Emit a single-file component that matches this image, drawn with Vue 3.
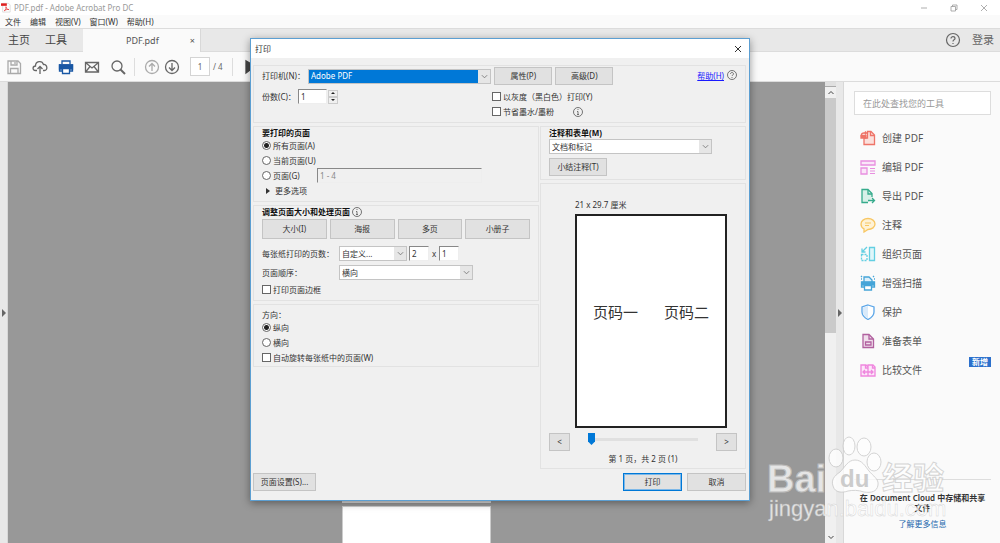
<script setup>
import { ref } from "vue";

const menus = ["文件", "编辑", "视图(V)", "窗口(W)", "帮助(H)"];
const pageModes = ["大小(I)", "海报", "多页", "小册子"];

const tools = [
  {
    name: "创建 PDF",
    color: "#ee7468",
    icon: '<path d="M4 8V14.500H14.500V5L11 1.500H7.500V8Z" fill="#fbe0dc"/><path d="M10.500 2V5.500H14"/><path d="M1.500 7V5C1.500 3.500 2.500 3 4 3H6M5 1.500L6.500 3L5 4.500" /><path d="M1 5.500H6V8H1Z" fill="#ee7468"/>',
  },
  {
    name: "编辑 PDF",
    color: "#e88fdf",
    icon: '<path d="M1 2H15V6H1ZM1 9H7V15H1Z" fill="#fae6f8"/><path d="M10 9.500H15M10 12H15M10 14.500H15" stroke-width="1"/>',
  },
  {
    name: "导出 PDF",
    color: "#36ab8c",
    icon: '<path d="M8 14.500H2V1.500H8L12 5.500V9" fill="#d8f0e8"/><path d="M8 2V6H12M8 12.500H14M12 10L14.500 12.500L12 15"/>',
  },
  {
    name: "注释",
    color: "#f8c763",
    icon: '<path d="M8 1.500C12 1.500 15 4 15 7S12 12.500 8 12.500L4 15V11.800C2 10.800 1 9 1 7C1 4 4 1.500 8 1.500Z" fill="#fef2d6"/><path d="M5 6H11M5 8.500H9" stroke-width="1"/>',
  },
  {
    name: "组织页面",
    color: "#63cfe2",
    icon: '<path d="M9.500 1.500H14.500V14.500H9.500Z" fill="#dff6fa"/><path d="M7 1L2 6M2 2.500V6H5.500"/><path d="M1.500 8.500H7V14.500H1.500Z" stroke-dasharray="2 1"/>',
  },
  {
    name: "增强扫描",
    color: "#45a5d8",
    icon: '<path d="M4 7V2H9L12 5V7" fill="#dceffa"/><path d="M4 12H1.500V7H14.500V12H12"/><path d="M2 7.500H14V10H2Z" fill="#45a5d8"/><path d="M4.500 10.500H11.500V15H4.500Z" fill="#fff"/><path d="M1 1L2 2M2 4H1M14 1L13 2M14 4H15"/>',
  },
  {
    name: "保护",
    color: "#5ba6e8",
    icon: '<path d="M8 1L14 3V8C14 12 11 14 8 15.500C5 14 2 12 2 8V3Z" fill="#fff"/><path d="M8 2V14.500C5 13 3 11 3 8V3.500Z" fill="#d9eafa" stroke="none"/>',
  },
  {
    name: "准备表单",
    color: "#b1619f",
    icon: '<path d="M3 1.500H9L13.500 6V14.500H3Z" fill="#f0dfec"/><path d="M9 2V6H13M5.500 9H11V12H5.500Z"/>',
  },
  {
    name: "比较文件",
    color: "#ef86de",
    icon: '<path d="M1 3H6L8 5V14H1ZM8 3H13L15 5V14H8Z" fill="#fce6f9"/><path d="M5.500 3V6H8M12.500 3V6H15M3 10H13M5 8L3 10L5 12M11 8L13 10L11 12"/>',
    badge: "新增",
  },
];

const printer = ref("Adobe PDF");
const copies = ref("1");
const gray = ref(false);
const saveInk = ref(false);
const range = ref("all");
const rangeText = ref("1 - 4");
const perSheet = ref("自定义...");
const cols = ref("2");
const rows = ref("1");
const order = ref("横向");
const border = ref(false);
const orientation = ref("portrait");
const autoRotate = ref(false);
const comments = ref("文档和标记");
const preview = ref(0);
const currentPage = ref("1");
const search = ref("");
</script>

<template>
  <div class="app">
    <header class="titlebar">
      <svg class="logo" viewBox="0 0 12 12">
        <path d="M2 1H9L11 3V11.500H2Z" fill="#fff" stroke="#ccc" stroke-width=".7" />
        <path d="M0 1H7V4H0Z" fill="#e02020" />
        <path d="M4 10C6 8 6.500 6 6 5C5.500 5 6 8 9.500 8.500C7 8 5 9 4 10Z" fill="none" stroke="#e02020" stroke-width=".8" />
      </svg>
      <span>PDF.pdf - Adobe Acrobat Pro DC</span>
      <div class="window-buttons">
        <button aria-label="最小化"><svg viewBox="0 0 8 8"><path d="M1 4H7" /></svg></button>
        <button aria-label="还原"><svg viewBox="0 0 8 8"><path d="M1 2.500H5.500V7H1ZM2.500 2.500V1H7V5.500H5.500" /></svg></button>
        <button aria-label="关闭"><svg viewBox="0 0 8 8"><path d="M1 1L7 7M7 1L1 7" /></svg></button>
      </div>
    </header>

    <nav class="menubar">
      <button v-for="m in menus" :key="m">{{ m }}</button>
    </nav>

    <div class="tabs">
      <button class="tab">主页</button>
      <button class="tab">工具</button>
      <div class="tab-doc">
        <span>PDF.pdf</span>
        <button aria-label="关闭标签">×</button>
      </div>
      <div class="account">
        <button aria-label="帮助">
          <svg viewBox="0 0 16 16">
            <circle cx="8" cy="8" r="6.500" />
            <path d="M6 6.500C6 4 10 4 10 6.500C10 8 8 7.700 8 9.500M8 11V12" />
          </svg>
        </button>
        <button class="login">登录</button>
      </div>
    </div>

    <div class="toolbar">
      <button class="dim" aria-label="保存">
        <svg viewBox="0 0 16 16"><path d="M2 2H12L14.500 4.500V14.500H2ZM5 2V6H11V2M4.500 14V9.500H12V14M9 3V5" /></svg>
      </button>
      <button aria-label="上传">
        <svg viewBox="0 0 16 16"><path d="M5 11.500H3.500C0 11.500 .5 7 3.500 7C3.500 2 10 1 11.500 5.500C15.500 5 16 11.500 12.500 11.500H11M8 15V7.500M5.500 10L8 7.500L10.500 10" /></svg>
      </button>
      <button class="blue" aria-label="打印">
        <svg viewBox="0 0 16 16">
          <path d="M4 5V2H12V5M4 12H1.500V6H14.500V12H12" />
          <path d="M1.500 6H14.500V10H1.500Z" fill="currentColor" />
          <path d="M4.500 9.500H11.500V14.500H4.500Z" fill="#fff" />
        </svg>
      </button>
      <button class="mail" aria-label="邮件">
        <svg viewBox="0 0 16 16"><path d="M1.500 3.500H14.500V13H1.500ZM2 4L8 9L14 4M2 12.500L6 7.500M14 12.500L10 7.500" /></svg>
      </button>
      <button aria-label="查找">
        <svg viewBox="0 0 16 16"><circle cx="7" cy="7" r="5" /><path d="M10.500 10.500L15 15" stroke-width="2" /></svg>
      </button>
      <i class="divider first-divider"></i>
      <button class="dim" aria-label="上一页">
        <svg viewBox="0 0 16 16"><circle cx="8" cy="8" r="6.500" /><path d="M8 12V4.500M5 7.500L8 4.500L11 7.500" /></svg>
      </button>
      <button class="next-page" aria-label="下一页">
        <svg viewBox="0 0 16 16"><circle cx="8" cy="8" r="6.500" /><path d="M8 4V11.500M5 8.500L8 11.500L11 8.500" /></svg>
      </button>
      <input v-model="currentPage" class="page-number" aria-label="页码" />
      <span class="page-total">/ 4</span>
      <i class="divider"></i>
      <button class="pointer" aria-label="选择">
        <svg viewBox="0 0 16 16"><path d="M2 2V14L6 11L14 9Z" fill="currentColor" /></svg>
      </button>
    </div>

    <main class="workspace">
      <button class="gutter" aria-label="展开导览"><svg viewBox="0 0 4 8"><path d="M0 0L4 4L0 8Z" /></svg></button>
      <section class="document">
        <div class="sheet first"></div>
        <div class="sheet second"></div>
      </section>
      <div class="scrollbar">
        <i class="split"></i>
        <svg viewBox="0 0 8 8"><path d="M1.500 5L4 2.500L6.500 5" /></svg>
        <div class="track"><div class="thumb"></div></div>
        <svg viewBox="0 0 8 8"><path d="M1.500 3L4 5.500L6.500 3" /></svg>
      </div>
      <button class="gutter right" aria-label="收起工具"><svg viewBox="0 0 4 8"><path d="M0 0L4 4L0 8Z" /></svg></button>
      <aside class="sidebar">
        <input v-model="search" class="search" placeholder="在此处查找您的工具" aria-label="查找工具" />
        <ul>
          <li v-for="t in tools" :key="t.name">
            <button>
              <svg viewBox="0 0 16 16" :style="{ stroke: t.color }" v-html="t.icon"></svg>
              <span>{{ t.name }}</span>
            </button>
            <b v-if="t.badge" class="badge">{{ t.badge }}</b>
          </li>
        </ul>
        <footer>
          <p>在 Document Cloud 中存储和共享文件</p>
          <a href="#">了解更多信息</a>
        </footer>
      </aside>
    </main>

    <div class="overlay">
      <form class="dialog" role="dialog" aria-label="打印" @submit.prevent>
        <div class="dialog-title">
          <span>打印</span>
          <button type="button" aria-label="关闭"><svg viewBox="0 0 8 8"><path d="M1 1L7 7M7 1L1 7" /></svg></button>
        </div>

        <div class="dialog-body">
          <section class="group printer">
            <div class="row printer-row">
              <label class="printer-label" for="printer">打印机(N)：</label>
              <div class="combo selected">
                <select id="printer" v-model="printer"><option>Adobe PDF</option></select>
                <span class="arrow"><svg viewBox="0 0 8 8"><path d="M1 2.500L4 5.500L7 2.500" /></svg></span>
              </div>
              <button type="button" class="btn">属性(P)</button>
              <button type="button" class="btn">高级(D)</button>
              <div class="help">
                <a href="#">帮助(H)</a>
                <svg class="info" viewBox="0 0 10 10"><circle cx="5" cy="5" r="4.500" /><path d="M3.500 4C3.500 2 6.500 2 6.500 4C6.500 5 5 5 5 6M5 7V8" /></svg>
              </div>
            </div>
            <div class="copies-row">
              <div class="row copies">
                <label for="copies">份数(C)：</label>
                <input id="copies" v-model="copies" class="field" />
                <div class="spin">
                  <button type="button" aria-label="增加"><svg viewBox="0 0 4 2"><path d="M0 2L2 0L4 2Z" /></svg></button>
                  <button type="button" aria-label="减少"><svg viewBox="0 0 4 2"><path d="M0 0L2 2L4 0Z" /></svg></button>
                </div>
              </div>
              <div>
                <label class="row check"><input v-model="gray" type="checkbox" />以灰度（黑白色）打印(Y)</label>
                <div class="row">
                  <label class="row check"><input v-model="saveInk" type="checkbox" />节省墨水/墨粉</label>
                  <svg class="info ink-info" viewBox="0 0 10 10"><circle cx="5" cy="5" r="4.500" /><path d="M5 2V3M4 4.500H5V7.500M4 7.500H6" /></svg>
                </div>
              </div>
            </div>
          </section>

          <div class="columns">
            <div class="left">
              <section class="group pages">
                <h2>要打印的页面</h2>
                <label class="row check"><input v-model="range" type="radio" value="all" />所有页面(A)</label>
                <label class="row check"><input v-model="range" type="radio" value="current" />当前页面(U)</label>
                <div class="row">
                  <label class="row check range-label"><input v-model="range" type="radio" value="pages" />页面(G)</label>
                  <input v-model="rangeText" class="field range" disabled aria-label="页面范围" />
                </div>
                <button type="button" class="row more"><svg viewBox="0 0 4 6"><path d="M0 0L4 3L0 6Z" /></svg>更多选项</button>
              </section>

              <section class="group sizing">
                <h2>
                  调整页面大小和处理页面
                  <svg class="info" viewBox="0 0 10 10"><circle cx="5" cy="5" r="4.500" /><path d="M5 2V3M4 4.500H5V7.500M4 7.500H6" /></svg>
                </h2>
                <div class="modes">
                  <button v-for="m in pageModes" :key="m" type="button" class="btn">{{ m }}</button>
                </div>
                <div class="row sheet-row">
                  <label class="size-label" for="per-sheet">每张纸打印的页数：</label>
                  <div class="combo small">
                    <select id="per-sheet" v-model="perSheet"><option>自定义...</option></select>
                    <span class="arrow"><svg viewBox="0 0 8 8"><path d="M1 2.500L4 5.500L7 2.500" /></svg></span>
                  </div>
                  <input v-model="cols" class="field count" aria-label="列数" />
                  <span class="times">x</span>
                  <input v-model="rows" class="field count" aria-label="行数" />
                </div>
                <div class="row order-row">
                  <label class="size-label" for="order">页面顺序：</label>
                  <div class="combo medium">
                    <select id="order" v-model="order"><option>横向</option></select>
                    <span class="arrow"><svg viewBox="0 0 8 8"><path d="M1 2.500L4 5.500L7 2.500" /></svg></span>
                  </div>
                </div>
                <label class="row check"><input v-model="border" type="checkbox" />打印页面边框</label>
              </section>

              <section class="group orient">
                <h3>方向：</h3>
                <label class="row check"><input v-model="orientation" type="radio" value="portrait" />纵向</label>
                <label class="row check"><input v-model="orientation" type="radio" value="landscape" />横向</label>
                <label class="row check"><input v-model="autoRotate" type="checkbox" />自动旋转每张纸中的页面(W)</label>
              </section>
            </div>

            <div class="right-col">
              <section class="group comments">
                <h2><label for="comments">注释和表单(M)</label></h2>
                <div class="combo large">
                  <select id="comments" v-model="comments"><option>文档和标记</option></select>
                  <span class="arrow"><svg viewBox="0 0 8 8"><path d="M1 2.500L4 5.500L7 2.500" /></svg></span>
                </div>
                <button type="button" class="btn">小结注释(T)</button>
              </section>

              <section class="group preview">
                <figure>
                  <figcaption>21 x 29.7 厘米</figcaption>
                  <div class="paper"><span>页码一</span><span>页码二</span></div>
                </figure>
                <div class="pager">
                  <button type="button" class="btn" aria-label="上一页">&lt;</button>
                  <input v-model="preview" type="range" min="0" max="1" aria-label="预览页" />
                  <button type="button" class="btn" aria-label="下一页">&gt;</button>
                </div>
                <p>第 1 页，共 2 页 (1)</p>
              </section>
            </div>
          </div>

          <div class="actions">
            <button type="button" class="btn setup">页面设置(S)...</button>
            <button type="submit" class="btn primary">打印</button>
            <button type="button" class="btn">取消</button>
          </div>
        </div>
      </form>
    </div>

    <svg class="watermark" viewBox="0 0 190 100">
      <g class="mark">
        <text x="6" y="57" class="bai">Bai</text>
        <ellipse cx="75" cy="23" rx="7" ry="9" />
        <ellipse cx="88" cy="11" rx="6" ry="9" />
        <ellipse cx="103" cy="12" rx="7" ry="9" />
        <ellipse cx="113" cy="27" rx="7" ry="9" />
        <path d="M94 25C87 25 84 32 79 37C73 41 70 45 72 51C74 58 81 58 87 56C92 55 97 55 103 57C110 58 116 57 117 50C118 44 112 41 108 36C104 31 101 25 94 25Z" />
        <text x="121" y="54" class="jingyan">经验</text>
        <text x="8" y="81" class="url">jingyan.baidu.com</text>
      </g>
      <text x="79" y="52" class="du">du</text>
    </svg>
  </div>
</template>

<style>
body {
  margin: 0;
  overflow: hidden;
}
</style>

<style scoped>
.app {
  position: relative;
  display: flex;
  flex-direction: column;
  height: 100vh;
  overflow: hidden;
  background: #fafafa;
  color: #333;
  font: 8px/12px "Noto Sans", "Noto Sans CJK SC", sans-serif;
}
* {
  box-sizing: border-box;
}
button,
input,
select {
  margin: 0;
  padding: 0;
  border: 0;
  background: none;
  color: inherit;
  font: inherit;
  outline: 0;
}
h2,
h3,
p,
ul,
figure {
  margin: 0;
  padding: 0;
  list-style: none;
}
svg {
  display: block;
  flex: none;
  fill: none;
  stroke: currentColor;
}

/* window chrome */
.titlebar {
  display: flex;
  align-items: center;
  gap: 3px;
  height: 15px;
  padding: 0 12px 0 1px;
  background: #fff;
  color: #999;
}
.logo {
  width: 10px;
  height: 11px;
  stroke: none;
}
.window-buttons {
  display: flex;
  gap: 22px;
  margin-left: auto;
}
.window-buttons svg {
  width: 8px;
  height: 8px;
  stroke-width: 0.8;
}
.menubar {
  display: flex;
  gap: 9px;
  height: 13px;
  padding-left: 5px;
}
.tabs {
  display: flex;
  align-items: center;
  height: 24px;
  border-top: 1px solid #dcdcdc;
  border-bottom: 1px solid #dcdcdc;
  background: #e8e8e8;
}
.tab {
  margin-left: 8px;
  margin-right: 7px;
  color: #444;
  font-size: 11px;
}
.tab-doc {
  display: flex;
  align-items: center;
  justify-content: space-between;
  align-self: stretch;
  width: 118px;
  margin: 0 0 -1px 9px;
  padding: 0 5px 0 43px;
  border-right: 1px solid #d8d8d8;
  background: #fafafa;
  color: #555;
  font-size: 9px;
}
.account {
  display: flex;
  align-items: center;
  gap: 11px;
  margin-left: auto;
  padding-right: 6px;
  color: #666;
}
.account svg {
  width: 16px;
  height: 16px;
  stroke-width: 1.2;
}
.login {
  font-size: 11px;
}
.toolbar {
  display: flex;
  align-items: center;
  gap: 10px;
  height: 30px;
  padding-left: 6px;
  border-bottom: 1px solid #dcdcdc;
  color: #666;
}
.toolbar svg {
  width: 16px;
  height: 16px;
  stroke-width: 1.3;
}
.toolbar .dim {
  color: #aaa;
}
.toolbar .blue {
  color: #1857a4;
}
.toolbar .next-page {
  margin-left: -6px;
}
.divider {
  width: 1px;
  height: 18px;
  background: #ddd;
}
.first-divider {
  margin: 0 -1px 0 -2px;
}
.page-number {
  width: 20px;
  height: 19px;
  border: 1px solid #d4d4d4;
  background: #fff;
  text-align: center;
}
.page-total {
  margin: 0 -1px 0 -7px;
}
.pointer {
  margin-left: 1px;
  color: #444;
}

/* document area */
.workspace {
  display: flex;
  flex: 1;
  min-height: 0;
}
.gutter {
  display: flex;
  align-items: center;
  justify-content: center;
  width: 8px;
  border-right: 1px solid #d8d8d8;
  background: #e8e8e8;
}
.gutter svg {
  width: 4px;
  height: 8px;
  fill: #666;
  stroke: none;
}
.document {
  display: flex;
  flex: 1;
  flex-direction: column;
  align-items: center;
  gap: 3px;
  background: #989898;
}
.sheet {
  width: 149px;
  background: #fff;
}
.first {
  flex: 1;
  background: #ddd;
}
.second {
  height: 37px;
  border: 1px solid #ccc;
  border-bottom: 0;
}
.scrollbar {
  display: flex;
  flex-direction: column;
  align-items: center;
  width: 11px;
  padding-bottom: 2px;
  background: #f0f0f0;
  color: #444;
}
.scrollbar svg {
  width: 8px;
  height: 8px;
}
.split {
  align-self: stretch;
  height: 5px;
  margin-bottom: 2px;
  border-bottom: 1px solid #aaa;
  background: #e0e0e0;
}
.track {
  flex: 1;
  align-self: stretch;
  padding-top: 1px;
}
.thumb {
  height: 54%;
  background: #cacaca;
}

/* tools panel */
.sidebar {
  display: flex;
  flex-direction: column;
  width: 156px;
  padding: 9px 9px 14px 10px;
  background: #fafafa;
}
.search {
  height: 24px;
  padding: 0 8px;
  border: 1px solid #ddd;
  background: #fff;
  font-size: 9px;
}
.search::placeholder {
  color: #999;
  opacity: 1;
}
.sidebar ul {
  margin-top: 8px;
}
.sidebar li {
  display: flex;
  justify-content: space-between;
  height: 29px;
}
.sidebar li button {
  display: flex;
  align-items: center;
  gap: 6px;
  padding-left: 6px;
  color: #555;
  font-size: 10px;
}
.sidebar li svg {
  width: 16px;
  height: 16px;
  stroke-width: 1.3;
}
.badge {
  height: 10px;
  margin-top: 2px;
  padding: 0 3px;
  background: #2c70cc;
  color: #fff;
  line-height: 10px;
}
.sidebar footer {
  margin-top: auto;
  padding: 13px 2px 0;
  border-top: 1px solid #ddd;
  line-height: 10px;
  text-align: center;
}
.sidebar p {
  margin-bottom: 6px;
  font-weight: 600;
}
.sidebar a {
  color: #2468ad;
  text-decoration: none;
}

/* print dialog */
.overlay {
  position: absolute;
  inset: 0;
  display: flex;
  align-items: flex-start;
  justify-content: center;
  padding-top: 38px;
}
.dialog {
  width: 50%;
  min-width: 500px;
  border: 1px solid #5c9fd2;
  background: #f0f0f0;
  box-shadow: 0 2px 8px rgba(0, 0, 0, 0.4);
}
.dialog-title {
  display: flex;
  align-items: center;
  justify-content: space-between;
  height: 19px;
  padding: 0 7px 0 4px;
  background: #fff;
}
.dialog-title svg {
  width: 8px;
  height: 8px;
}
.dialog-body {
  display: flex;
  flex-direction: column;
  gap: 3px;
  padding: 7px 3px 9px 2px;
}
.group {
  padding: 0 8px;
  border: 1px solid #e2e2e2;
}
.group h2,
.group h3 {
  font-size: 8px;
  line-height: 11px;
}
.group h2 {
  color: #111;
}
.group h3 {
  font-weight: 400;
}
.row {
  display: flex;
  align-items: center;
}
.check {
  gap: 2px;
  height: 15px;
}
.check input {
  appearance: none;
  flex: none;
  width: 9px;
  height: 9px;
  border: 1px solid #666;
  background: #fff;
}
.check input[type="radio"] {
  border-radius: 50%;
}
.check input[type="radio"]:checked {
  background: radial-gradient(circle, #222 2px, #fff 3px);
}
.check input[type="checkbox"]:checked {
  background: #333;
}
.btn {
  min-width: 58px;
  height: 18px;
  border: 1px solid #c4c4c4;
  background: #e1e1e1;
}
.combo {
  display: flex;
  height: 15px;
  border: 1px solid #c4c4c4;
  background: #fff;
}
.combo select {
  appearance: none;
  flex: 1;
  min-width: 0;
  padding-left: 2px;
}
.combo.selected select {
  background: #0078d7;
  color: #fff;
}
.arrow {
  display: flex;
  align-items: center;
  justify-content: center;
  width: 12px;
  background: #e6e6e6;
  color: #777;
}
.arrow svg {
  width: 7px;
  height: 7px;
}
.field {
  height: 15px;
  padding-left: 2px;
  border: 1px solid #eee;
  border-top-color: #888;
  border-left-color: #888;
  background: #fff;
}
.info {
  width: 10px;
  height: 10px;
  color: #555;
  stroke-width: 0.8;
}
.printer {
  padding: 1px 8px 3px;
}
.printer-row {
  gap: 3px;
  margin-bottom: 4px;
}
.printer-label {
  width: 43px;
  white-space: nowrap;
}
.printer .combo {
  flex: 1;
}
.help {
  display: flex;
  gap: 3px;
  margin-left: 81px;
}
.help a {
  color: #1a1aff;
}
.copies-row {
  display: grid;
  grid-template-columns: 230px 1fr;
  align-items: start;
}
.copies label {
  width: 36px;
  white-space: nowrap;
}
.copies .field {
  width: 29px;
}
.spin {
  display: flex;
  flex-direction: column;
  margin-left: 1px;
}
.spin button {
  display: flex;
  align-items: center;
  justify-content: center;
  width: 10px;
  height: 7px;
  border: 1px solid #ccc;
}
.spin svg {
  width: 4px;
  height: 2px;
  fill: #222;
  stroke: none;
}
.ink-info {
  margin-left: 19px;
}
.columns {
  display: grid;
  grid-template-columns: 286px minmax(0, 1fr);
  gap: 1px;
}
.left,
.right-col {
  display: flex;
  flex-direction: column;
  gap: 3px;
}
.pages {
  padding-bottom: 3px;
}
.range-label {
  width: 55px;
}
.range {
  flex: 1;
  margin-right: 48px;
  background: #f0f0f0;
  color: #888;
}
.more {
  gap: 5px;
  height: 15px;
  padding-left: 4px;
}
.more svg {
  width: 4px;
  height: 6px;
  fill: #333;
  stroke: none;
}
.sizing {
  padding-bottom: 3px;
}
.sizing h2 {
  display: flex;
  align-items: center;
  gap: 2px;
}
.modes {
  display: grid;
  grid-template-columns: repeat(4, 1fr);
  gap: 3px;
  margin: 2px 0 7px;
}
.modes .btn {
  height: 20px;
}
.size-label {
  width: 77px;
  white-space: nowrap;
}
.sheet-row {
  margin-bottom: 4px;
}
.order-row {
  margin-bottom: 2px;
}
.small {
  width: 68px;
  margin-right: 2px;
}
.medium {
  width: 134px;
}
.large {
  width: 163px;
  margin: 1px 0 4px;
}
.count {
  width: 20px;
}
.times {
  width: 10px;
  text-align: center;
}
.orient {
  padding-top: 4px;
  padding-bottom: 1px;
}
.comments {
  padding-bottom: 3px;
}
.preview {
  flex: 1;
  padding-top: 15px;
  padding-bottom: 3px;
}
.preview figure {
  width: 152px;
  margin-left: 26px;
}
.preview figcaption {
  margin-bottom: 3px;
}
.paper {
  display: flex;
  align-items: center;
  justify-content: center;
  gap: 26px;
  height: 214px;
  padding-bottom: 18px;
  border: 2px solid #222;
  background: #fff;
  font-size: 15px;
}
.pager {
  display: flex;
  gap: 18px;
  margin: 5px 0 2px;
}
.pager .btn {
  min-width: 21px;
}
.pager input {
  appearance: none;
  flex: 1;
  min-width: 0;
  height: 13px;
}
.pager input::-webkit-slider-runnable-track {
  height: 3px;
  background: #e0e0e0;
}
.pager input::-webkit-slider-thumb {
  appearance: none;
  width: 7px;
  height: 12px;
  margin-top: -5px;
  background: #0078d7;
  clip-path: polygon(0 0, 100% 0, 100% 70%, 50% 100%, 0 70%);
}
.preview p {
  text-align: center;
}
.actions {
  display: flex;
  gap: 5px;
  margin-top: 1px;
}
.setup {
  width: 63px;
  margin-right: auto;
}
.actions .btn:not(.setup) {
  min-width: 59px;
}
.primary {
  border: 1px solid #0078d7;
  box-shadow: inset 0 0 0 1px #7db8e8;
}

/* site mark over the lower right corner */
.watermark {
  position: absolute;
  right: 49px;
  bottom: 8px;
  width: 190px;
  height: 100px;
  pointer-events: none;
  stroke: none;
}
.mark {
  fill: #fff;
  stroke: #c8c8c8;
  stroke-width: 1;
  opacity: 0.75;
}
.bai,
.du {
  font: bold 38px "Liberation Sans", sans-serif;
}
.jingyan {
  font: bold 31px "Noto Sans CJK SC", sans-serif;
}
.url {
  font: 22px "Liberation Sans", sans-serif;
  stroke-width: 0.4;
}
.du {
  fill: #ccc;
  font-size: 24px;
}
</style>
